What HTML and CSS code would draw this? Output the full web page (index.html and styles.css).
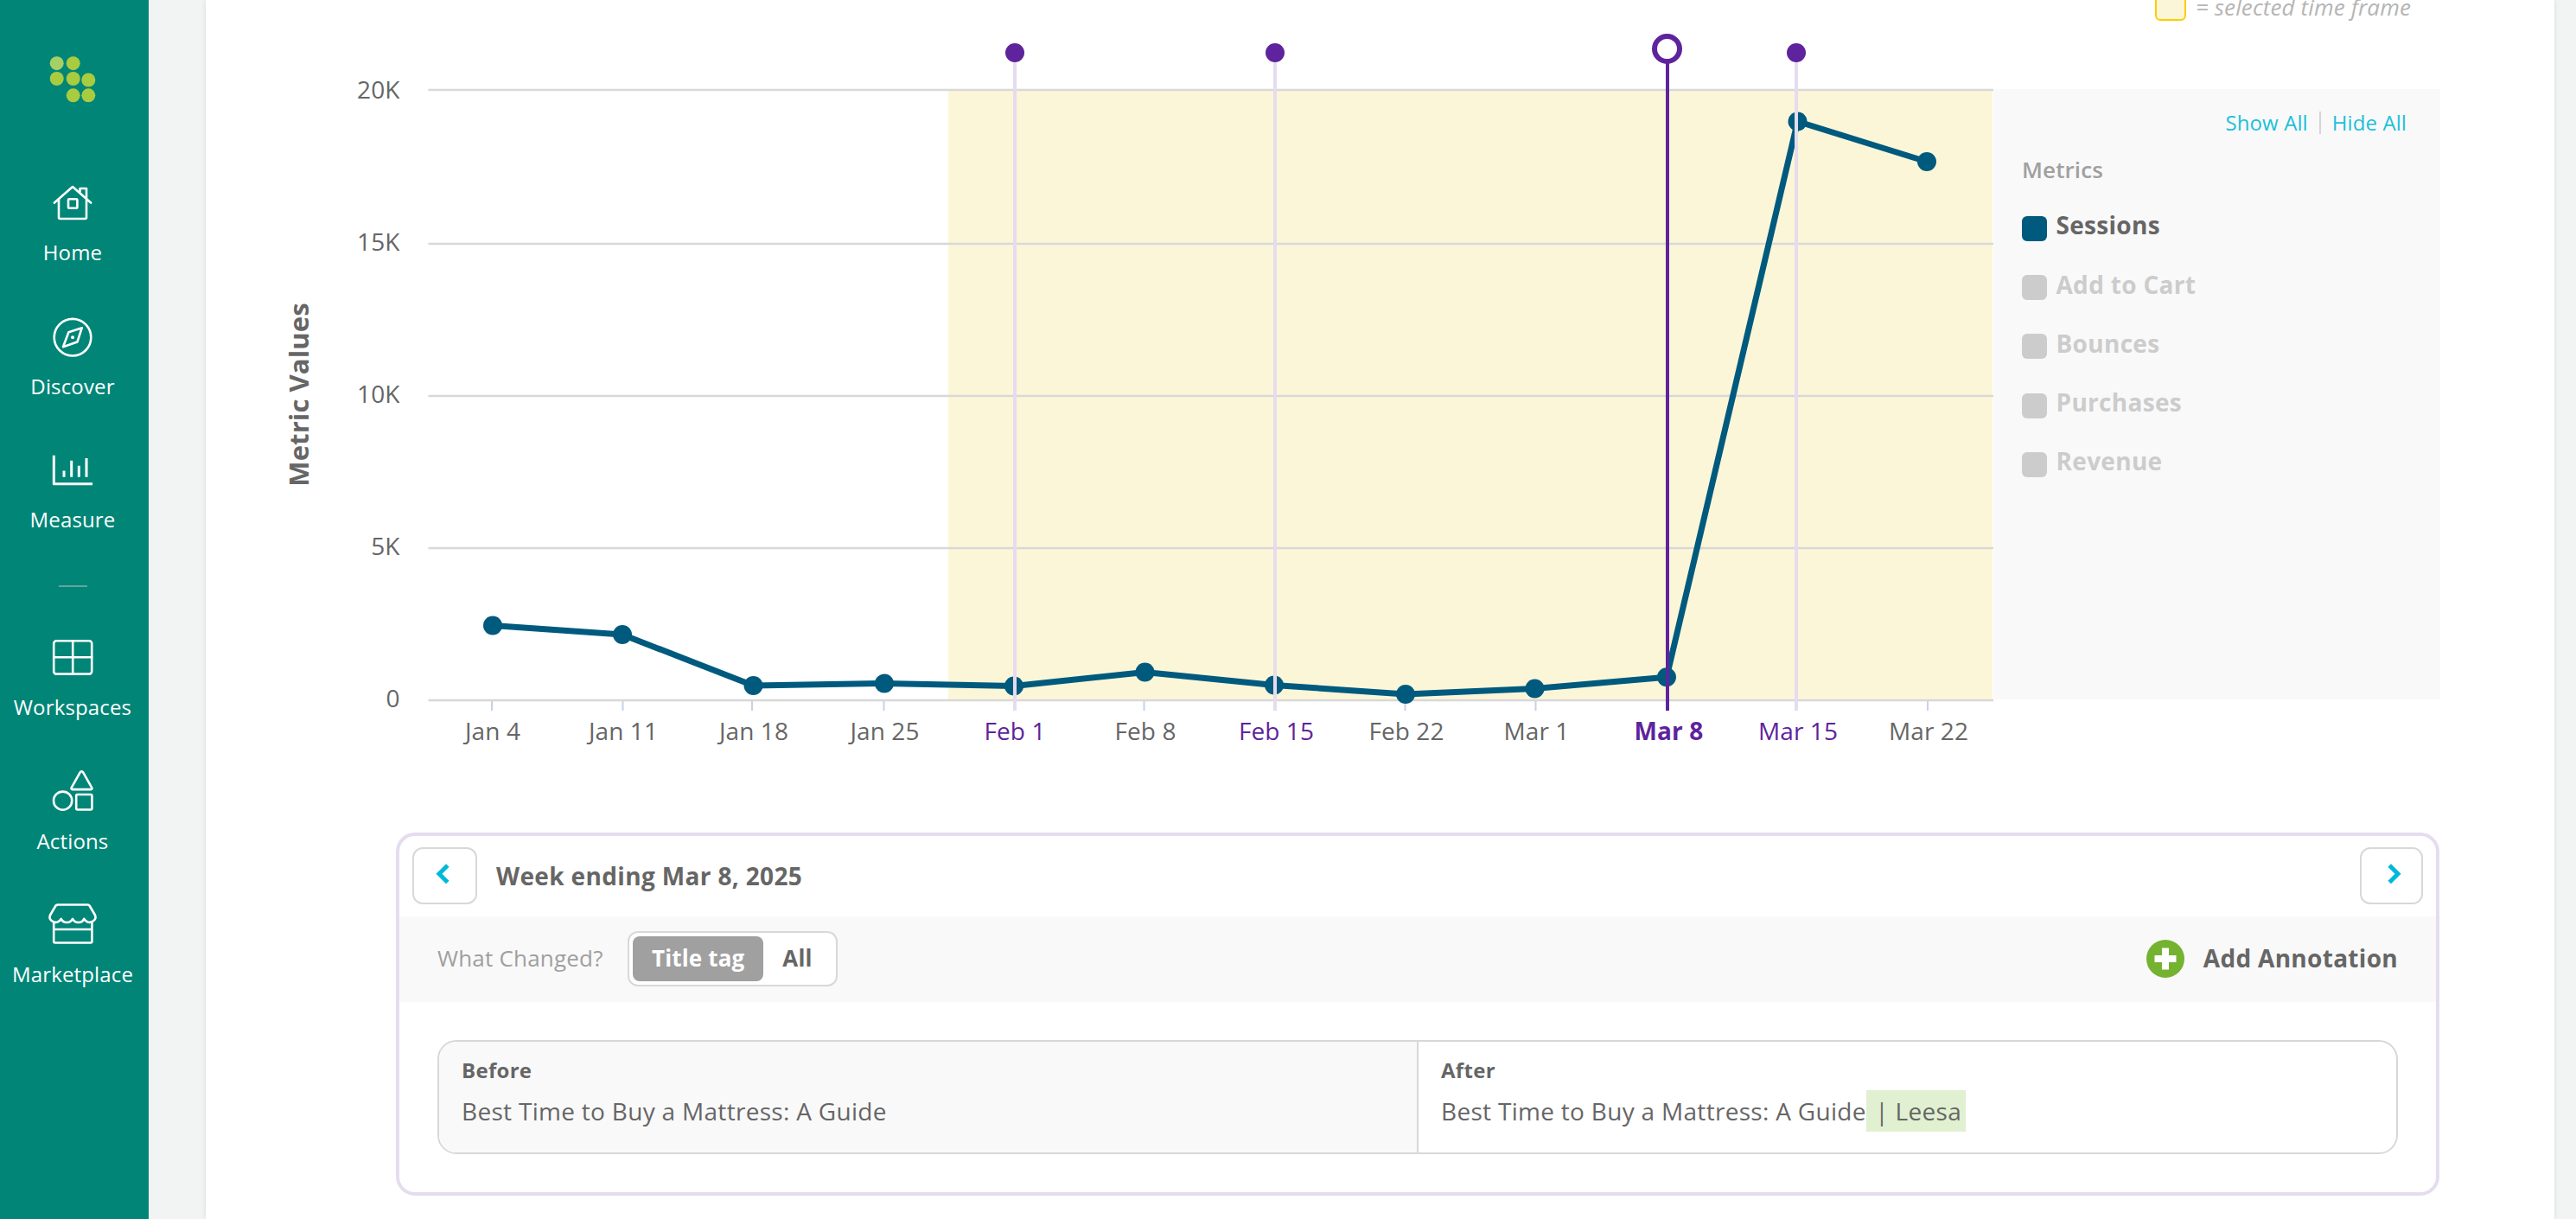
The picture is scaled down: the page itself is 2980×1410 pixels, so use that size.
FILE: index.html
```html
<!DOCTYPE html>
<html lang="en">
<head>
<meta charset="utf-8">
<title>Metric Values</title>
<link rel="stylesheet" href="styles.css">
</head>
<body>
<aside class="sidebar">
  <svg class="logo" viewBox="0 0 56 42">
    <circle cx="9.7" cy="9.2" r="8" class="logo-light"/>
    <circle cx="28.7" cy="9.2" r="8"/>
    <circle cx="9.7" cy="27" r="8"/>
    <circle cx="28.7" cy="27" r="8"/>
    <circle cx="46.3" cy="28.5" r="8"/>
    <circle cx="28.7" cy="46.3" r="8"/>
    <circle cx="46.3" cy="46.3" r="8"/>
  </svg>
  <nav class="nav">
    <a class="nav-item">
      <svg class="icon" viewBox="0 0 60 60"><path d="M8.900 29.600 30 11l21.100 18.600M14 25.800V46.500a1.500 1.500 0 0 0 1.500 1.500h29a1.500 1.500 0 0 0 1.500-1.500V13h-7.500v4"/><rect x="25" y="25.300" width="10.400" height="10.400" rx="1"/></svg>
      <span>Home</span>
    </a>
    <a class="nav-item">
      <svg class="icon" viewBox="0 0 60 60"><circle cx="30" cy="30.2" r="21.3"/><path d="M40.800 19.200 25.400 24.200 19 41.200 35.400 35.600Z"/><circle cx="30" cy="30.2" r="2" class="dot"/></svg>
      <span>Discover</span>
    </a>
    <a class="nav-item">
      <svg class="icon" viewBox="0 0 60 60"><path d="M8.300 12.800V45.800H53M20 30.400v7.400M28.700 18.800v19M37.300 24.800v13M46 16v21.800" class="bars"/></svg>
      <span>Measure</span>
    </a>
  </nav>
  <div class="nav-divider"></div>
  <nav class="nav">
    <a class="nav-item">
      <svg class="icon" viewBox="0 0 60 60"><rect x="8.200" y="9.200" width="44" height="38.400" rx="3"/><path d="M30.200 9.200v38.400M8.200 28.300h44"/></svg>
      <span>Workspaces</span>
    </a>
    <a class="nav-item">
      <svg class="icon" viewBox="0 0 60 60"><path d="M38.800 6.200 28.700 24.100q-.8 2 1.200 2H51q2 0 1.200-2L42 6.200q-1.600-2-3.200 0Z"/><circle cx="18.600" cy="39.200" r="10.600"/><rect x="34.200" y="32" width="18.200" height="17.500" rx="1.500"/></svg>
      <span>Actions</span>
    </a>
    <a class="nav-item">
      <svg class="icon" viewBox="0 0 60 60"><path d="M12.500 5.500h35.500l1.500 1 6.200 10.500C58.500 22 53 27 47.500 25.500Q44.500 24.500 43.300 21.800 41 26 36.700 26T30 21.800Q28 26 23.400 26T16.700 21.800Q15.500 24.500 12.500 25.500C7 27 1.500 22 4.300 17L10.500 6.500Z M8.200 25.500V48a1.500 1.500 0 0 0 1.500 1.500h41.200a1.500 1.500 0 0 0 1.500-1.500V25.500M8.200 34h44.200"/></svg>
      <span>Marketplace</span>
    </a>
  </nav>
</aside>
<main class="card">
  <section class="chart-row">
    <svg class="chart" viewBox="238 0 2068 900">
      <rect x="1097" y="104" width="1208" height="705" class="selection"/>
      <path class="grid" d="M495.500 104H2306M495.500 282H2306M495.500 458H2306M495.500 634H2306M495.500 810H2306"/>
      <path class="ticks" d="M569 811v11M720.500 811v11M870 811v11M1022.500 811v11M1323.500 811v11M1625.500 811v11M1776.500 811v11M2230 811v11"/>
      <polyline class="series" points="570,723.5 720,734 871.500,793 1023,790.500 1173,793.500 1324.500,777.500 1474,792.500 1626,803 1775.500,796.500 1928,783.300 2079.500,140.500 2229,187"/>
      <g class="points">
        <circle cx="570" cy="723.500" r="11"/><circle cx="720" cy="734" r="11"/><circle cx="871.500" cy="793" r="11"/><circle cx="1023" cy="790.500" r="11"/><circle cx="1173" cy="793.500" r="11"/><circle cx="1324.500" cy="777.500" r="11"/><circle cx="1474" cy="792.500" r="11"/><circle cx="1626" cy="803" r="11"/><circle cx="1775.500" cy="796.500" r="11"/><circle cx="1928" cy="783.300" r="11"/><circle cx="2079.500" cy="140.500" r="11"/><circle cx="2229" cy="187" r="11"/>
      </g>
      <path class="events" d="M1174 61V822M1475 61V822M2078 61V822"/>
      <path class="event-active" d="M1929 61V822"/>
      <g class="event-dots"><circle cx="1174" cy="61" r="11"/><circle cx="1475" cy="61" r="11"/><circle cx="2078" cy="61" r="11"/></g>
      <circle class="event-ring" cx="1928.500" cy="56.500" r="14.500"/>
      <g class="y-labels">
        <text x="462.500" y="114">20K</text><text x="462.500" y="290">15K</text><text x="462.500" y="466">10K</text><text x="462.500" y="642">5K</text><text x="462.500" y="818">0</text>
      </g>
      <text class="axis-title" transform="translate(357 456.500) rotate(-90)">Metric Values</text>
      <g class="x-labels">
        <text x="570" y="856">Jan 4</text><text x="721" y="856">Jan 11</text><text x="872" y="856">Jan 18</text><text x="1023.500" y="856">Jan 25</text><text x="1174" y="856" class="has-event">Feb 1</text><text x="1325" y="856">Feb 8</text><text x="1476.500" y="856" class="has-event">Feb 15</text><text x="1627" y="856">Feb 22</text><text x="1777.500" y="856">Mar 1</text><text x="1930.500" y="856" class="has-event current">Mar 8</text><text x="2080" y="856" class="has-event">Mar 15</text><text x="2231" y="856">Mar 22</text>
      </g>
    </svg>
    <div class="side">
      <div class="legend"><span class="swatch"></span><em>= selected time frame</em></div>
      <div class="metrics">
        <div class="toggles"><a>Show All</a><i></i><a>Hide All</a></div>
        <h3>Metrics</h3>
        <ul>
          <li class="on"><b></b><span>Sessions</span></li>
          <li><b></b><span>Add to Cart</span></li>
          <li><b></b><span>Bounces</span></li>
          <li><b></b><span>Purchases</span></li>
          <li><b></b><span>Revenue</span></li>
        </ul>
      </div>
    </div>
  </section>
  <section class="detail">
    <header class="detail-head">
      <button class="step"><svg viewBox="0 0 16 24"><path d="M13.800 2 4 11.800l9.800 9.800"/></svg></button>
      <h2>Week ending Mar 8, 2025</h2>
      <button class="step next"><svg viewBox="0 0 16 24"><path d="M2.200 2 12 11.800 2.200 21.600"/></svg></button>
    </header>
    <div class="filter">
      <span class="filter-label">What Changed?</span>
      <div class="segmented"><span class="segment active">Title tag</span><span class="segment">All</span></div>
      <div class="add"><svg viewBox="0 0 44 44"><circle cx="22" cy="22" r="22"/><path d="M22 9.500v25M9.500 22h25"/></svg><span>Add Annotation</span></div>
    </div>
    <div class="diff">
      <div class="diff-cell before"><h4>Before</h4><p>Best Time to Buy a Mattress: A Guide</p></div>
      <div class="diff-cell"><h4>After</h4><p>Best Time to Buy a Mattress: A Guide<ins> | Leesa</ins></p></div>
    </div>
  </section>
</main>
</body>
</html>
```
FILE: styles.css
```css
* { box-sizing: border-box; }
body {
  margin: 0;
  height: 1410px;
  display: flex;
  overflow: hidden;
  background: #f2f4f4;
  color: #666;
  font-family: "Open Sans", "Noto Sans", sans-serif;
}
h2, h3, h4, p, ul { margin: 0; padding: 0; }

.sidebar {
  width: 172px;
  height: 1410px;
  padding: 64px 4px 0 0;
  display: flex;
  flex-direction: column;
  align-items: center;
  flex: none;
  background: #008577;
  color: #fff;
}
.logo { width: 56px; height: 42px; fill: #a9cb40; overflow: visible; flex: none; }
.logo-light { fill: #a5d063; }
.nav { display: flex; flex-direction: column; gap: 50.5px; margin-top: 99px; }
.nav-item { height: 104px; display: flex; flex-direction: column; align-items: center; gap: 10px; font-size: 24px; line-height: 34px; letter-spacing: .15px; }
.nav-divider + .nav .nav-item span { margin-top: -1px; }
.icon { width: 60px; height: 60px; fill: none; stroke: #fff; stroke-width: 2.6; stroke-linejoin: round; stroke-linecap: round; }
.icon .dot { fill: #fff; stroke: none; }
.icon .bars { stroke-width: 3; stroke-linecap: butt; }
.nav-divider { width: 33px; height: 2px; margin-top: 59px; background: #5fa79d; flex: none; }
.nav-divider + .nav { margin-top: 53px; }

.card { width: 2716.5px; margin-left: 66px; height: 1410px; flex: none; background: #fff; box-shadow: 0 0 5px rgba(0, 0, 0, .12); }
.chart-row { display: flex; height: 900px; }
.chart { width: 2068px; height: 900px; flex: none; overflow: visible; font-size: 28px; letter-spacing: .1px; }
.selection { fill: #fcf6d8; }
.grid { stroke: #d8d8d8; stroke-width: 2.4; }
.ticks { stroke: #c6d3e2; stroke-width: 2; }
.series { fill: none; stroke: #005a7e; stroke-width: 7; stroke-linejoin: round; }
.points { fill: #005a7e; }
.events { stroke: #e5dcef; stroke-width: 4; }
.event-active { stroke: #5e239d; stroke-width: 4; }
.event-dots { fill: #5e239d; }
.event-ring { fill: #fff; stroke: #5e239d; stroke-width: 6; }
.y-labels { fill: #666; text-anchor: end; }
.x-labels { fill: #666; text-anchor: middle; }
.x-labels .has-event { fill: #5e239d; }
.current { font-weight: 700; }
.axis-title { fill: #666; font-size: 31px; font-weight: 700; text-anchor: middle; }

.side { width: 517px; flex: none; }
.legend { height: 103px; padding-right: 34px; display: flex; justify-content: flex-end; align-items: flex-start; gap: 11px; font-size: 26px; line-height: 36px; letter-spacing: .12px; color: #b5b5b5; }
.legend em { margin-top: -10px; }
.swatch { width: 36px; height: 36px; margin-top: -12px; border: 2px solid #fc0; border-radius: 6px; background: #fcf6d8; }
.metrics { height: 706px; padding: 24px 39px 0 33px; background: #f9f9f9; }
.toggles { display: flex; justify-content: flex-end; align-items: center; gap: 13px; height: 30px; font-size: 24px; line-height: 34px; color: #1cbfda; letter-spacing: .1px; }
.toggles i { width: 2px; height: 26px; background: #d5d5d5; }
.metrics h3 { margin-top: 21px; font-size: 26px; line-height: 36px; font-weight: 600; color: #a0a0a0; letter-spacing: .1px; }
.metrics ul { list-style: none; margin-top: 28px; }
.metrics li { height: 68.2px; display: flex; gap: 11px; font-size: 28px; line-height: 38px; font-weight: 700; letter-spacing: .3px; color: #ccc; }
.metrics li span { margin: -.5px 0 0 -.5px; }
.metrics li b { width: 29px; height: 29px; margin-top: 8px; border-radius: 6px; background: #ccc; }
.metrics .on { color: #666; }
.metrics .on b { background: #005a7e; }
.metrics .on span { margin-top: -1px; }

.detail { width: 2364px; height: 420px; margin: 63px 0 0 220px; border: 4px solid #e5dcef; border-radius: 22px; overflow: hidden; letter-spacing: .3px; }
.detail-head { height: 93px; padding: 0 15px 1px; display: flex; align-items: center; }
.step { width: 75px; height: 66px; padding: 0; border: 2px solid #d8d8d8; border-radius: 12px; background: #fff; display: flex; align-items: center; justify-content: center; }
.step svg { width: 16px; height: 24px; margin: 0 6px 4px 0; fill: none; stroke: #00b9d8; stroke-width: 5; }
.next { width: 73px; margin-left: auto; }
.next svg { margin: 0 0 4px 6px; }
.detail-head h2 { margin-left: 22px; font-size: 28px; line-height: 38px; font-weight: 700; letter-spacing: .35px; }
.filter { height: 99px; padding: 0 44px 1px 44px; display: flex; align-items: center; background: #f9f9f9; }
.filter-label { width: 220px; margin-top: -2px; font-size: 26px; line-height: 36px; letter-spacing: .2px; color: #9f9f9f; }
.segmented { height: 64px; width: 243px; padding: 4px; display: flex; align-items: center; border: 2px solid #d8d8d8; border-radius: 12px; background: #fff; font-size: 26px; line-height: 36px; font-weight: 700; letter-spacing: .15px; white-space: nowrap; }
.segment { flex: none; height: 52px; padding: 7px 22px 0; border-radius: 8px; }
.active { background: #a0a0a0; color: #fff; }
.add { margin-left: auto; display: flex; align-items: center; gap: 22px; font-size: 28px; line-height: 38px; font-weight: 700; }
.add span { margin-top: -2px; }
.add svg { width: 44px; height: 44px; fill: #74b230; stroke: none; }
.add path { stroke: #fff; stroke-width: 8; }
.diff { width: 2268px; height: 132px; margin: 44px 0 0 44px; display: flex; border: 2px solid #d8d8d8; border-radius: 22px; overflow: hidden; }
.diff-cell { flex: 1; padding: 16px 26px 0; font-size: 28px; line-height: 38px; }
.before { background: #f9f9f9; border-right: 2px solid #d8d8d8; }
.diff h4 { font-size: 24px; line-height: 33px; font-weight: 700; }
.diff p { margin-top: 12px; white-space: pre; }
.diff ins { padding: 5px 5px 5px 3px; text-decoration: none; background: #e0f0d0; }
```
